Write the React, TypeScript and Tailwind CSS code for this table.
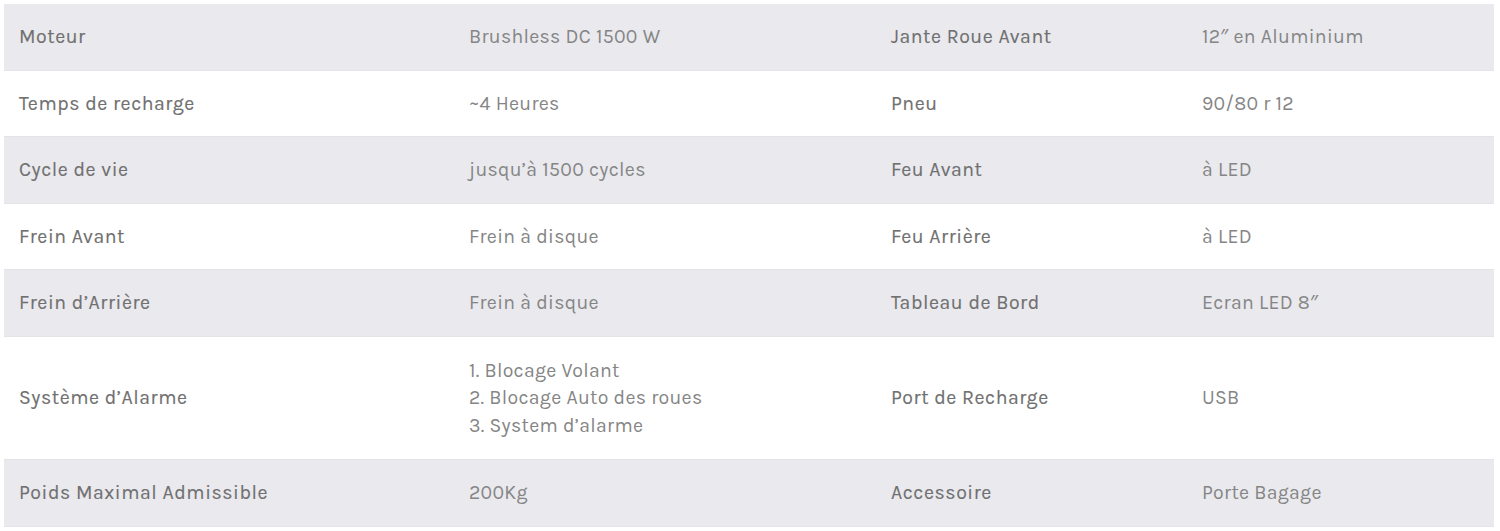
import React from "react";

type Row = { k1: string; v1: string[]; k2: string; v2: string };

const rows: Row[] = [
  { k1: "Moteur", v1: ["Brushless DC 1500 W"], k2: "Jante Roue Avant", v2: "12\u2033 en Aluminium" },
  { k1: "Temps de recharge", v1: ["~4 Heures"], k2: "Pneu", v2: "90/80 r 12" },
  { k1: "Cycle de vie", v1: ["jusqu\u2019à 1500 cycles"], k2: "Feu Avant", v2: "à LED" },
  { k1: "Frein Avant", v1: ["Frein à disque"], k2: "Feu Arrière", v2: "à LED" },
  { k1: "Frein d\u2019Arrière", v1: ["Frein à disque"], k2: "Tableau de Bord", v2: "Ecran LED 8\u2033" },
  {
    k1: "Système d\u2019Alarme",
    v1: ["1. Blocage Volant", "2. Blocage Auto des roues", "3. System d\u2019alarme"],
    k2: "Port de Recharge",
    v2: "USB",
  },
  { k1: "Poids Maximal Admissible", v1: ["200Kg"], k2: "Accessoire", v2: "Porte Bagage" },
];

export default function App() {
  return (
    <div className="bg-white px-[4px] pt-[4px] font-['Karla','Noto_Sans',sans-serif] text-[19.5px] leading-[27.5px] tracking-[0.3px]">
      <table className="w-[1490px] table-fixed border-collapse">
        <colgroup>
          <col className="w-[450px]" />
          <col className="w-[422px]" />
          <col className="w-[311px]" />
          <col className="w-[307px]" />
        </colgroup>
        <tbody>
          {rows.map((r, i) => (
            <tr
              key={i}
              className={`border-b border-[#e4e4e8] ${i % 2 === 0 ? "bg-[#e9e9ee]" : "bg-white"}`}
            >
              <td className="px-[15px] py-[19px] align-middle font-normal tracking-[0.55px] text-[#707070] [-webkit-text-stroke:0.15px_#707070]">
                {r.k1}
              </td>
              <td
                className={`px-[15px] align-middle text-[#858585] ${
                  r.v1.length > 1 ? "py-[20px]" : "py-[19px]"
                }`}
              >
                {r.v1.map((l, j) => (
                  <div key={j}>{l}</div>
                ))}
              </td>
              <td className="px-[15px] py-[19px] align-middle font-normal tracking-[0.55px] text-[#707070] [-webkit-text-stroke:0.15px_#707070]">
                {r.k2}
              </td>
              <td className="px-[15px] py-[19px] align-middle text-[#858585]">{r.v2}</td>
            </tr>
          ))}
        </tbody>
      </table>
    </div>
  );
}
